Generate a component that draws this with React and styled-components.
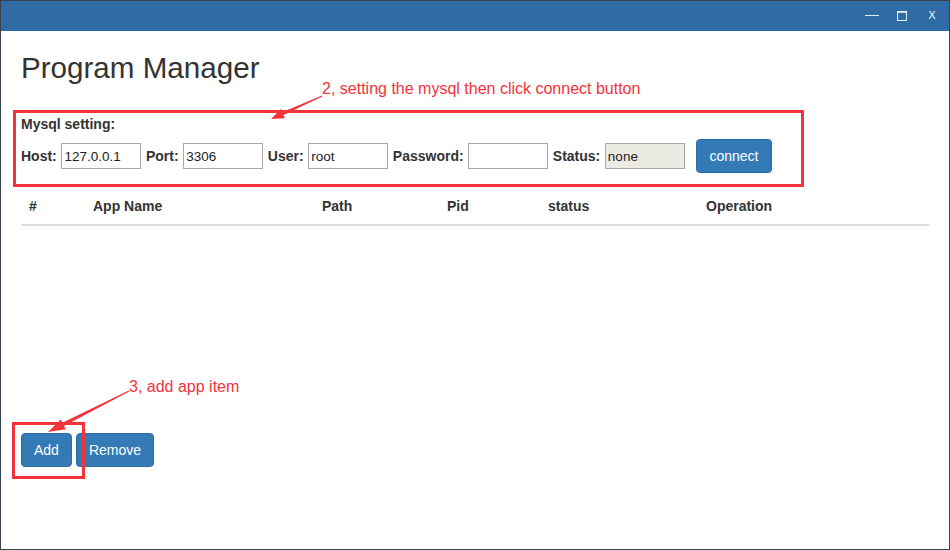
import React from "react";
import styled, { createGlobalStyle } from "styled-components";

const GlobalStyle = createGlobalStyle`
  html, body {
    margin: 0;
    padding: 0;
    background: #ffffff;
  }
  body {
    font-family: "Liberation Sans", Arial, sans-serif;
    font-size: 14px;
    line-height: 20px;
    color: #333333;
  }
`;

const Window = styled.div`
  position: relative;
  width: 950px;
  height: 550px;
  box-sizing: border-box;
  border: 1px solid #36434f;
  display: flex;
  flex-direction: column;
  background: #ffffff;
`;

const TitleBar = styled.div`
  height: 30px;
  flex: none;
  background: #2f6ca5;
  display: flex;
  justify-content: flex-end;
  align-items: center;
  padding-right: 2px;
`;

const WinControl = styled.div`
  width: 30px;
  height: 30px;
  display: flex;
  align-items: center;
  justify-content: center;
  color: #e9eff6;
  font-family: "DejaVu Sans", sans-serif;
  font-size: 11px;
`;

const Content = styled.div`
  flex: 1;
  padding: 0 20px;
`;

const Heading = styled.h2`
  margin: 20px 0 10px;
  font-size: 29.6px;
  font-weight: 500;
  line-height: 33px;
  color: #333333;
`;

const SectionTitle = styled.div`
  padding-top: 20px;
  font-weight: bold;
`;

const FormRow = styled.div`
  margin-top: 5px;
  height: 34px;
  display: flex;
  align-items: center;
  gap: 4.6px;
`;

const FieldLabel = styled.label`
  font-weight: bold;
`;

const Field = styled.input`
  width: 80px;
  height: 26px;
  box-sizing: border-box;
  border: 1px solid #a9a9a9;
  padding: 0 2px;
  margin: 0;
  font-family: "Liberation Sans", Arial, sans-serif;
  font-size: 13.5px;
  color: #222222;
  background: ${(p) => (p.disabled ? "#ebebe4" : "#ffffff")};
  outline: none;
`;

const Button = styled.button`
  margin-left: ${(p) => p.$gap || 0}px;
  height: 34px;
  padding: 6px 12px;
  box-sizing: border-box;
  border: 1px solid #2e6da4;
  border-radius: 4px;
  background: #337ab7;
  color: #ffffff;
  font-family: "Liberation Sans", Arial, sans-serif;
  font-size: 14px;
  line-height: 20px;
  cursor: pointer;
`;

const TableArea = styled.div`
  margin-top: 15px;
  height: 245px;
`;

const Table = styled.table`
  width: 100%;
  table-layout: fixed;
  border-collapse: collapse;
`;

const Th = styled.th`
  width: ${(p) => p.$w}px;
  box-sizing: border-box;
  padding: 8px;
  text-align: left;
  line-height: 20px;
  font-weight: bold;
  border-bottom: 2px solid #dddddd;
`;

const ButtonBar = styled.div`
  display: flex;
  gap: 4px;
`;

const Overlay = styled.div`
  position: absolute;
  inset: 0;
  pointer-events: none;
`;

const Note = styled.span`
  position: absolute;
  left: ${(p) => p.$x}px;
  top: ${(p) => p.$y}px;
  font-family: "Liberation Sans", Arial, sans-serif;
  font-size: 16px;
  line-height: 18px;
  color: #f3333c;
  white-space: nowrap;
`;

const RED = "#f3333c";

// tapered arrow: thin tail, thicker shaft near the head, triangular head
const arrowPoints = (tail, tip, headLen, headHalf, shaftHalf) => {
  const dx = tip[0] - tail[0];
  const dy = tip[1] - tail[1];
  const len = Math.hypot(dx, dy);
  const ux = dx / len;
  const uy = dy / len;
  const nx = -uy;
  const ny = ux;
  const bx = tip[0] - ux * headLen;
  const by = tip[1] - uy * headLen;
  const pts = [
    [tail[0] + nx * 0.4, tail[1] + ny * 0.4],
    [bx + nx * shaftHalf, by + ny * shaftHalf],
    [bx + nx * headHalf, by + ny * headHalf],
    tip,
    [bx - nx * headHalf, by - ny * headHalf],
    [bx - nx * shaftHalf, by - ny * shaftHalf],
    [tail[0] - nx * 0.4, tail[1] - ny * 0.4],
  ];
  return pts.map((p) => p.map((v) => v.toFixed(1)).join(",")).join(" ");
};

const columns = [
  { name: "#", w: 64 },
  { name: "App Name", w: 229 },
  { name: "Path", w: 125 },
  { name: "Pid", w: 101 },
  { name: "status", w: 158 },
  { name: "Operation", w: 231 },
];

const App = () => {
  return (
    <>
      <GlobalStyle />
      <Window>
        <TitleBar>
          <WinControl>
            <svg width="14" height="2" viewBox="0 0 14 2">
              <rect x="0" y="0" width="14" height="1" fill="#e9eff6" />
            </svg>
          </WinControl>
          <WinControl>
            <svg width="10" height="10" viewBox="0 0 10 10">
              <rect x="0.5" y="1" width="9" height="8.5" fill="none" stroke="#e9eff6" />
              <rect x="0" y="0" width="10" height="1.5" fill="#e9eff6" />
            </svg>
          </WinControl>
          <WinControl>X</WinControl>
        </TitleBar>

        <Content>
          <Heading>Program Manager</Heading>
          <SectionTitle>Mysql setting:</SectionTitle>
          <FormRow>
            <FieldLabel>Host:</FieldLabel>
            <Field defaultValue="127.0.0.1" />
            <FieldLabel>Port:</FieldLabel>
            <Field defaultValue="3306" />
            <FieldLabel>User:</FieldLabel>
            <Field defaultValue="root" />
            <FieldLabel>Password:</FieldLabel>
            <Field type="password" />
            <FieldLabel>Status:</FieldLabel>
            <Field defaultValue="none" disabled />
            <Button $gap={7}>connect</Button>
          </FormRow>

          <TableArea>
            <Table>
              <thead>
                <tr>
                  {columns.map((c) => (
                    <Th key={c.name} $w={c.w}>
                      {c.name}
                    </Th>
                  ))}
                </tr>
              </thead>
              <tbody></tbody>
            </Table>
          </TableArea>

          <ButtonBar>
            <Button>Add</Button>
            <Button>Remove</Button>
          </ButtonBar>
        </Content>

        <Overlay>
          <svg width="950" height="550" viewBox="0 0 950 550">
            <rect x="13.5" y="110.5" width="788" height="74" fill="none" stroke={RED} strokeWidth="3" />
            <rect x="12.5" y="422.5" width="70" height="54" fill="none" stroke={RED} strokeWidth="3" />
            <polygon points={arrowPoints([321, 95], [270, 118], 13, 5, 1.6)} fill={RED} />
            <polygon points={arrowPoints([128, 390], [47, 431], 17, 5.5, 1.8)} fill={RED} />
          </svg>
          <Note $x={321} $y={79}>
            2, setting the mysql then click connect button
          </Note>
          <Note $x={128} $y={377}>
            3, add app item
          </Note>
        </Overlay>
      </Window>
    </>
  );
};

export default App;
